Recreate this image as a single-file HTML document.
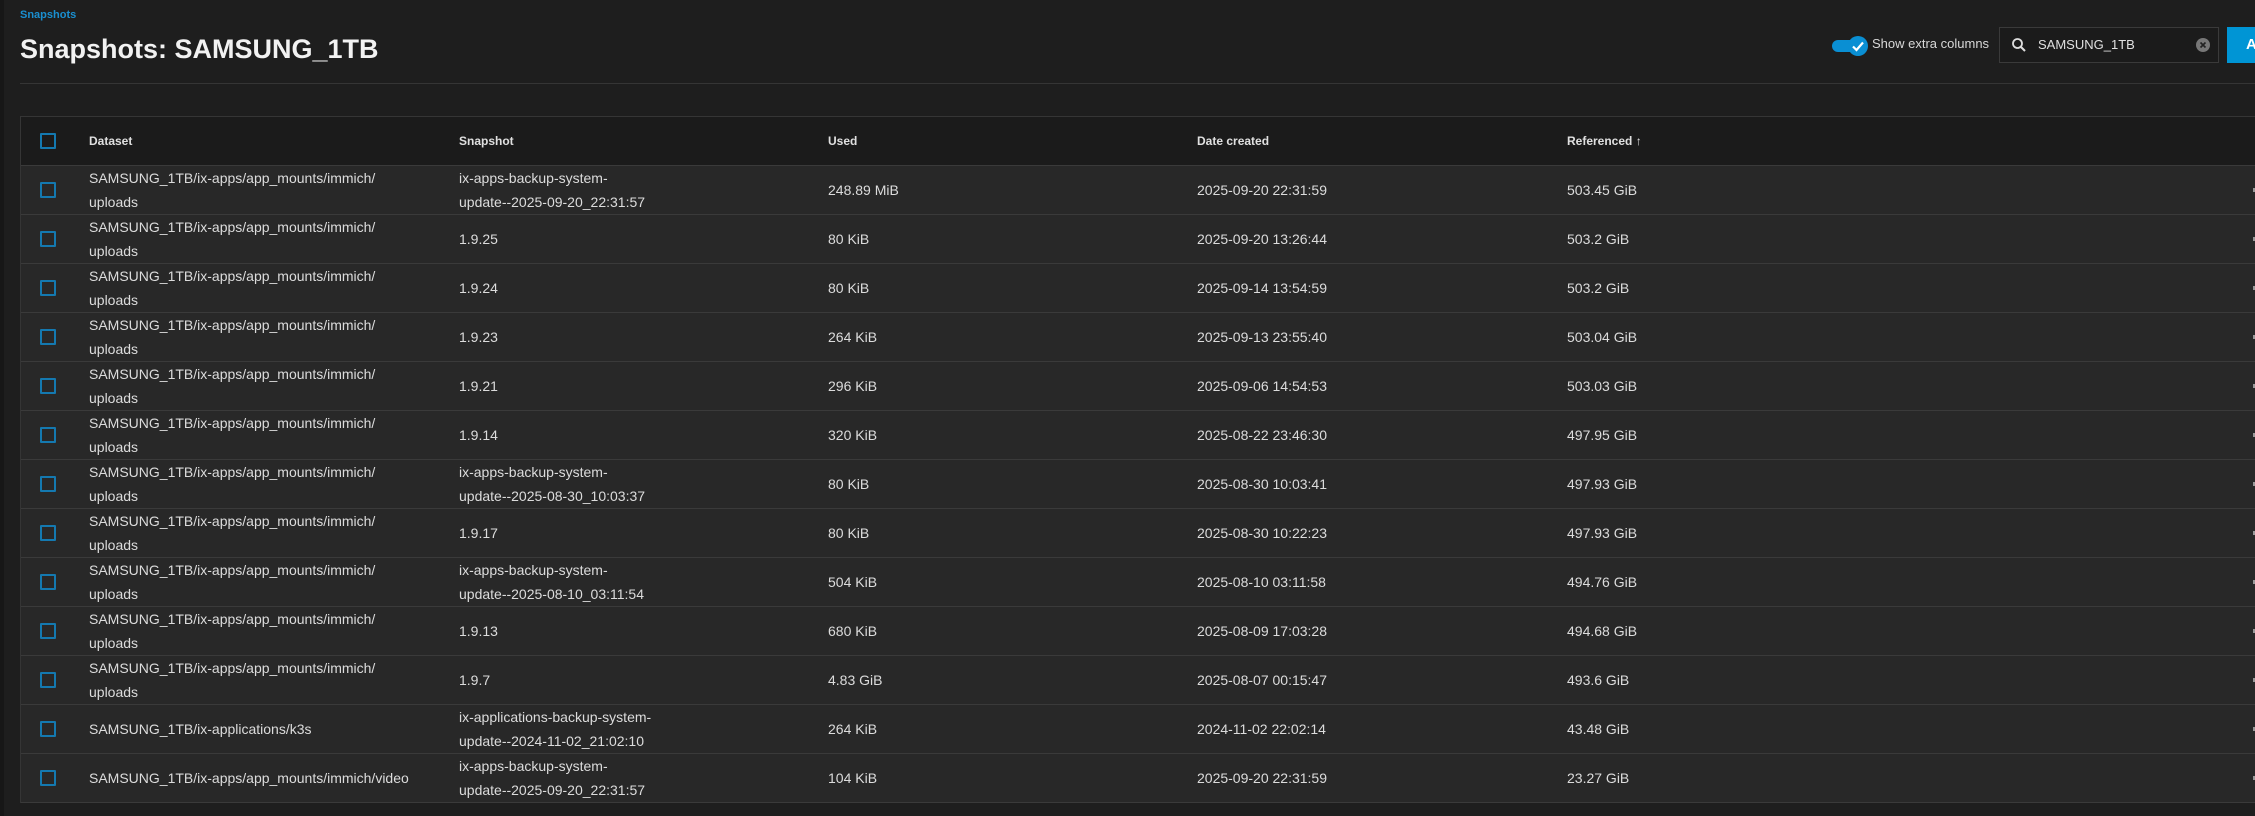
<!DOCTYPE html>
<html><head><meta charset="utf-8"><style>
*{margin:0;padding:0;box-sizing:border-box}
body{width:2255px;height:816px;background:#1e1e1e;overflow:hidden;font-family:"Liberation Sans",sans-serif;color:#dcdcdc;position:relative}
.strip{position:absolute;left:0;top:0;width:4px;height:816px;background:#171717}
.bc{position:absolute;left:20px;top:9px;font-size:11px;font-weight:bold;color:#1a8fd0}
.title{position:absolute;left:20px;top:34px;font-size:27px;font-weight:bold;color:#f2f2f2}
.hr{position:absolute;left:20px;right:0;top:83px;height:1px;background:#353535}
.tbl{position:absolute;left:20px;right:0;top:116px;border-top:1px solid #353535;border-left:1px solid #353535}
.row{position:relative;height:49px;border-bottom:1px solid #3a3a3a;background:#282828}
.row.h{background:#1b1b1b;font-weight:bold;font-size:12px;color:#e0e0e0}
.cb{position:absolute;left:19px;top:16px;width:16px;height:16px;border:2px solid #1479b0;border-radius:1px}
.c{position:absolute;top:0;height:48px;display:flex;align-items:center;font-size:14px;line-height:24px}
.h .c{font-size:12px}
.c1{left:68px}.c2{left:438px}.c3{left:807px}.c4{left:1176px}.c5{left:1546px}
.dot{position:absolute;right:0;top:22px;width:2px;height:4px;background:#999}
.tg{position:absolute;left:1832px;top:40px;width:30px;height:12px;border-radius:6px;background:#0a8fd3}
.knob{position:absolute;left:1848px;top:36px;width:20px;height:20px;border-radius:50%;background:#0a8fd3}
.tl{position:absolute;left:1872px;top:36px;font-size:13px;color:#d8d8d8}
.sb{position:absolute;left:1999px;top:27px;width:220px;height:36px;border:1px solid #3a3a3a;background:#1b1b1b}
.st{position:absolute;left:38px;top:9px;font-size:13px;color:#e0e0e0}
.btn{position:absolute;left:2227px;top:27px;width:40px;height:36px;background:#0095d5;color:#fff;font-weight:bold;font-size:15px;padding:9px 0 0 19px}
</style></head><body>
<div class="strip"></div>
<div class="bc">Snapshots</div>
<div class="title">Snapshots: SAMSUNG_1TB</div>
<div class="tg"></div>
<div class="knob"><svg width="20" height="20" viewBox="0 0 20 20"><path d="M5 10.5l3.5 3.5L15 6.5" stroke="#fff" stroke-width="2.2" fill="none"/></svg></div>
<div class="tl">Show extra columns</div>
<div class="sb">
<svg style="position:absolute;left:11px;top:9px" width="16" height="16" viewBox="0 0 16 16"><circle cx="6.5" cy="6.5" r="4.5" stroke="#ddd" stroke-width="1.8" fill="none"/><path d="M10 10l4 4" stroke="#ddd" stroke-width="2"/></svg>
<div class="st">SAMSUNG_1TB</div>
<svg style="position:absolute;left:196px;top:10px" width="14" height="14" viewBox="0 0 14 14"><circle cx="7" cy="7" r="7" fill="#777"/><path d="M4.5 4.5l5 5M9.5 4.5l-5 5" stroke="#222" stroke-width="1.6"/></svg>
</div>
<div class="btn">A</div>
<div class="hr"></div>
<div class="tbl">
<div class="row h"><div class="cb"></div><div class="c c1">Dataset</div><div class="c c2">Snapshot</div><div class="c c3">Used</div><div class="c c4">Date created</div><div class="c c5">Referenced&nbsp;<span style="font-weight:normal">↑</span></div></div>
<div class="row"><div class="cb"></div><div class="c c1">SAMSUNG_1TB/ix-apps/app_mounts/immich/<br>uploads</div><div class="c c2">ix-apps-backup-system-<br>update--2025-09-20_22:31:57</div><div class="c c3">248.89 MiB</div><div class="c c4">2025-09-20 22:31:59</div><div class="c c5">503.45 GiB</div><div class="dot"></div></div>
<div class="row"><div class="cb"></div><div class="c c1">SAMSUNG_1TB/ix-apps/app_mounts/immich/<br>uploads</div><div class="c c2">1.9.25</div><div class="c c3">80 KiB</div><div class="c c4">2025-09-20 13:26:44</div><div class="c c5">503.2 GiB</div><div class="dot"></div></div>
<div class="row"><div class="cb"></div><div class="c c1">SAMSUNG_1TB/ix-apps/app_mounts/immich/<br>uploads</div><div class="c c2">1.9.24</div><div class="c c3">80 KiB</div><div class="c c4">2025-09-14 13:54:59</div><div class="c c5">503.2 GiB</div><div class="dot"></div></div>
<div class="row"><div class="cb"></div><div class="c c1">SAMSUNG_1TB/ix-apps/app_mounts/immich/<br>uploads</div><div class="c c2">1.9.23</div><div class="c c3">264 KiB</div><div class="c c4">2025-09-13 23:55:40</div><div class="c c5">503.04 GiB</div><div class="dot"></div></div>
<div class="row"><div class="cb"></div><div class="c c1">SAMSUNG_1TB/ix-apps/app_mounts/immich/<br>uploads</div><div class="c c2">1.9.21</div><div class="c c3">296 KiB</div><div class="c c4">2025-09-06 14:54:53</div><div class="c c5">503.03 GiB</div><div class="dot"></div></div>
<div class="row"><div class="cb"></div><div class="c c1">SAMSUNG_1TB/ix-apps/app_mounts/immich/<br>uploads</div><div class="c c2">1.9.14</div><div class="c c3">320 KiB</div><div class="c c4">2025-08-22 23:46:30</div><div class="c c5">497.95 GiB</div><div class="dot"></div></div>
<div class="row"><div class="cb"></div><div class="c c1">SAMSUNG_1TB/ix-apps/app_mounts/immich/<br>uploads</div><div class="c c2">ix-apps-backup-system-<br>update--2025-08-30_10:03:37</div><div class="c c3">80 KiB</div><div class="c c4">2025-08-30 10:03:41</div><div class="c c5">497.93 GiB</div><div class="dot"></div></div>
<div class="row"><div class="cb"></div><div class="c c1">SAMSUNG_1TB/ix-apps/app_mounts/immich/<br>uploads</div><div class="c c2">1.9.17</div><div class="c c3">80 KiB</div><div class="c c4">2025-08-30 10:22:23</div><div class="c c5">497.93 GiB</div><div class="dot"></div></div>
<div class="row"><div class="cb"></div><div class="c c1">SAMSUNG_1TB/ix-apps/app_mounts/immich/<br>uploads</div><div class="c c2">ix-apps-backup-system-<br>update--2025-08-10_03:11:54</div><div class="c c3">504 KiB</div><div class="c c4">2025-08-10 03:11:58</div><div class="c c5">494.76 GiB</div><div class="dot"></div></div>
<div class="row"><div class="cb"></div><div class="c c1">SAMSUNG_1TB/ix-apps/app_mounts/immich/<br>uploads</div><div class="c c2">1.9.13</div><div class="c c3">680 KiB</div><div class="c c4">2025-08-09 17:03:28</div><div class="c c5">494.68 GiB</div><div class="dot"></div></div>
<div class="row"><div class="cb"></div><div class="c c1">SAMSUNG_1TB/ix-apps/app_mounts/immich/<br>uploads</div><div class="c c2">1.9.7</div><div class="c c3">4.83 GiB</div><div class="c c4">2025-08-07 00:15:47</div><div class="c c5">493.6 GiB</div><div class="dot"></div></div>
<div class="row"><div class="cb"></div><div class="c c1">SAMSUNG_1TB/ix-applications/k3s</div><div class="c c2">ix-applications-backup-system-<br>update--2024-11-02_21:02:10</div><div class="c c3">264 KiB</div><div class="c c4">2024-11-02 22:02:14</div><div class="c c5">43.48 GiB</div><div class="dot"></div></div>
<div class="row"><div class="cb"></div><div class="c c1">SAMSUNG_1TB/ix-apps/app_mounts/immich/video</div><div class="c c2">ix-apps-backup-system-<br>update--2025-09-20_22:31:57</div><div class="c c3">104 KiB</div><div class="c c4">2025-09-20 22:31:59</div><div class="c c5">23.27 GiB</div><div class="dot"></div></div>
</div>
</body></html>
